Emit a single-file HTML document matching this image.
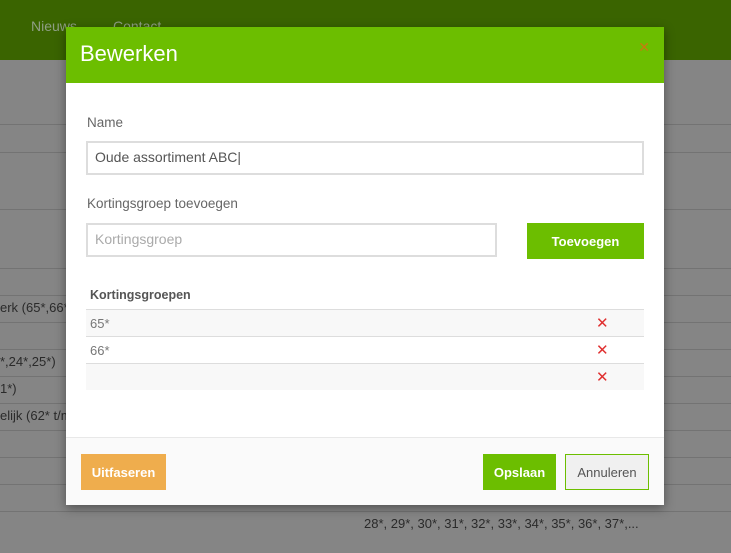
<!DOCTYPE html>
<html style="background:#858585"><head><style>
*{box-sizing:border-box;margin:0;padding:0}
body{width:731px;height:553px;overflow:hidden;background:#858585;font-family:"Liberation Sans",sans-serif;position:relative}
.top{position:absolute;left:0;top:0;width:731px;height:60px;background:#3a6400}
.nav{position:absolute;top:18px;color:#8e9e84;font-size:14px}
.ln{position:absolute;left:0;width:731px;height:1px;background:#737373}
.bt{position:absolute;color:#2a2a2a;font-size:13px}
.modal{position:absolute;left:66px;top:27px;width:598px;height:478px;background:#fff;box-shadow:0 3px 10px rgba(0,0,0,.4)}
.hd{height:56px;background:#6cbe00;color:#fff;font-size:22px;padding:14px 0 0 14px}
.x{position:absolute;right:14px;top:12px;color:#c87a10;font-size:14px}
.lbl{position:absolute;left:21px;color:#666;font-size:13.5px}
.inp{position:absolute;border:2px solid #ddd;font-size:14px;color:#555;padding:6px 7px}
.btn{position:absolute;color:#fff;font-size:13px;font-weight:bold;text-align:center}
.row{position:absolute;left:20px;width:558px;height:27px;font-size:13px;color:#777;padding:6px 4px;border-top:1px solid #ddd}
.rx{position:absolute;left:510px;top:4px;color:#e03030;font-size:15px}
.ft{position:absolute;left:0;top:410px;width:598px;height:68px;background:#fafafa;border-top:1px solid #e8e8e8}
</style></head><body>
<div class="top"></div>
<div class="nav" style="left:31px">Nieuws</div><div class="nav" style="left:113px">Contact</div>
<div class="ln" style="top:124px"></div><div class="ln" style="top:152px"></div><div class="ln" style="top:209px"></div>
<div class="ln" style="top:268px"></div><div class="ln" style="top:295px"></div><div class="ln" style="top:322px"></div>
<div class="ln" style="top:349px"></div><div class="ln" style="top:376px"></div><div class="ln" style="top:403px"></div>
<div class="ln" style="top:430px"></div><div class="ln" style="top:457px"></div><div class="ln" style="top:484px"></div><div class="ln" style="top:511px"></div>
<div class="bt" style="left:0;top:300px">erk (65*,66*</div>
<div class="bt" style="left:0;top:354px">*,24*,25*)</div>
<div class="bt" style="left:0;top:381px">1*)</div>
<div class="bt" style="left:0;top:408px">elijk (62* t/m</div>
<div class="bt" style="left:364px;top:516px">28*, 29*, 30*, 31*, 32*, 33*, 34*, 35*, 36*, 37*,...</div>
<div class="modal">
<div class="hd">Bewerken</div><div class="x">✕</div>
<div class="lbl" style="top:88px">Name</div>
<div class="inp" style="left:20px;top:114px;width:558px;height:34px">Oude assortiment ABC|</div>
<div class="lbl" style="top:169px">Kortingsgroep toevoegen</div>
<div class="inp" style="left:20px;top:196px;width:411px;height:34px;color:#aaa">Kortingsgroep</div>
<div class="btn" style="left:461px;top:196px;width:117px;height:36px;background:#6cbe00;padding-top:11px">Toevoegen</div>
<div style="position:absolute;left:24px;top:261px;font-size:12.5px;font-weight:bold;color:#555">Kortingsgroepen</div>
<div class="row" style="top:282px;background:#f8f8f8">65*<span class="rx">✕</span></div>
<div class="row" style="top:309px">66*<span class="rx">✕</span></div>
<div class="row" style="top:336px;background:#f8f8f8"><span class="rx">✕</span></div>
<div class="ft">
<div class="btn" style="left:15px;top:16px;width:85px;height:36px;background:#efad4d;padding-top:11px">Uitfaseren</div>
<div class="btn" style="left:417px;top:16px;width:73px;height:36px;background:#6cbe00;padding-top:11px">Opslaan</div>
<div class="btn" style="left:499px;top:16px;width:84px;height:36px;background:#f0f0f0;border:1px solid #6cbe00;color:#555;font-weight:normal;padding-top:10px">Annuleren</div>
</div>
</div>
</body></html>
